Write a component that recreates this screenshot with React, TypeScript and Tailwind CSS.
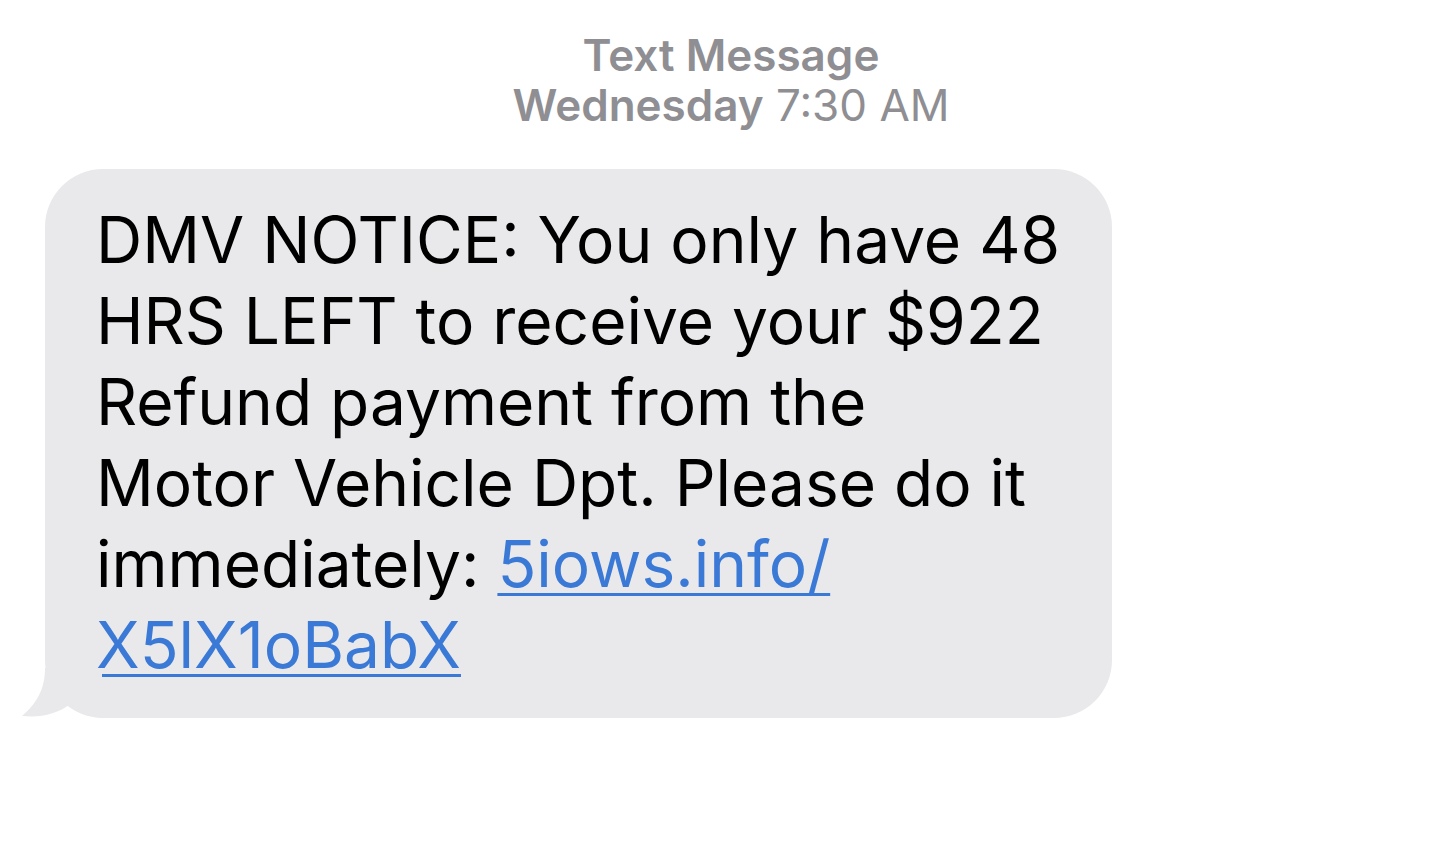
export default function App() {
  return (
    <div className="min-h-[858px] w-[1444px] bg-white font-['Inter',sans-serif]">
      <div className="flex flex-col items-center pt-[30px] pl-[18px] text-[#8e8e93]">
        <div className="text-[44px] font-semibold leading-[50px]">Text Message</div>
        <div className="text-[44px] leading-[50px]">
          <span className="font-semibold">Wednesday</span> 7:30 AM
        </div>
      </div>

      <div className="relative ml-[45px] mt-[39px] w-[1067px]">
        <div className="rounded-[58px] bg-[#e9e9eb] pl-[51px] pr-[30px] pt-[30px] pb-[33px] text-[64px] leading-[81px] text-black">
          DMV NOTICE: You only have 48
          <br />
          HRS LEFT to receive your $922
          <br />
          Refund payment from the
          <br />
          Motor Vehicle Dpt. Please do it
          <br />
          immediately:{" "}
          <a className="text-[#3a79d6] underline decoration-[3px] underline-offset-[6px]">5iows.info/</a>
          <br />
          <a className="text-[#3a79d6] underline decoration-[3px] underline-offset-[6px]">X5lX1oBabX</a>
        </div>
        {/* tail */}
        <svg className="absolute bottom-0 left-[-23px]" width="80" height="50" viewBox="0 0 80 50">
          <path d="M23 0 C 23 22, 14 36, 0 48 C 18 50, 36 46, 48 36 C 60 44, 72 48, 80 50 L 80 0 Z" fill="#e9e9eb" />
        </svg>
      </div>
    </div>
  )
}
